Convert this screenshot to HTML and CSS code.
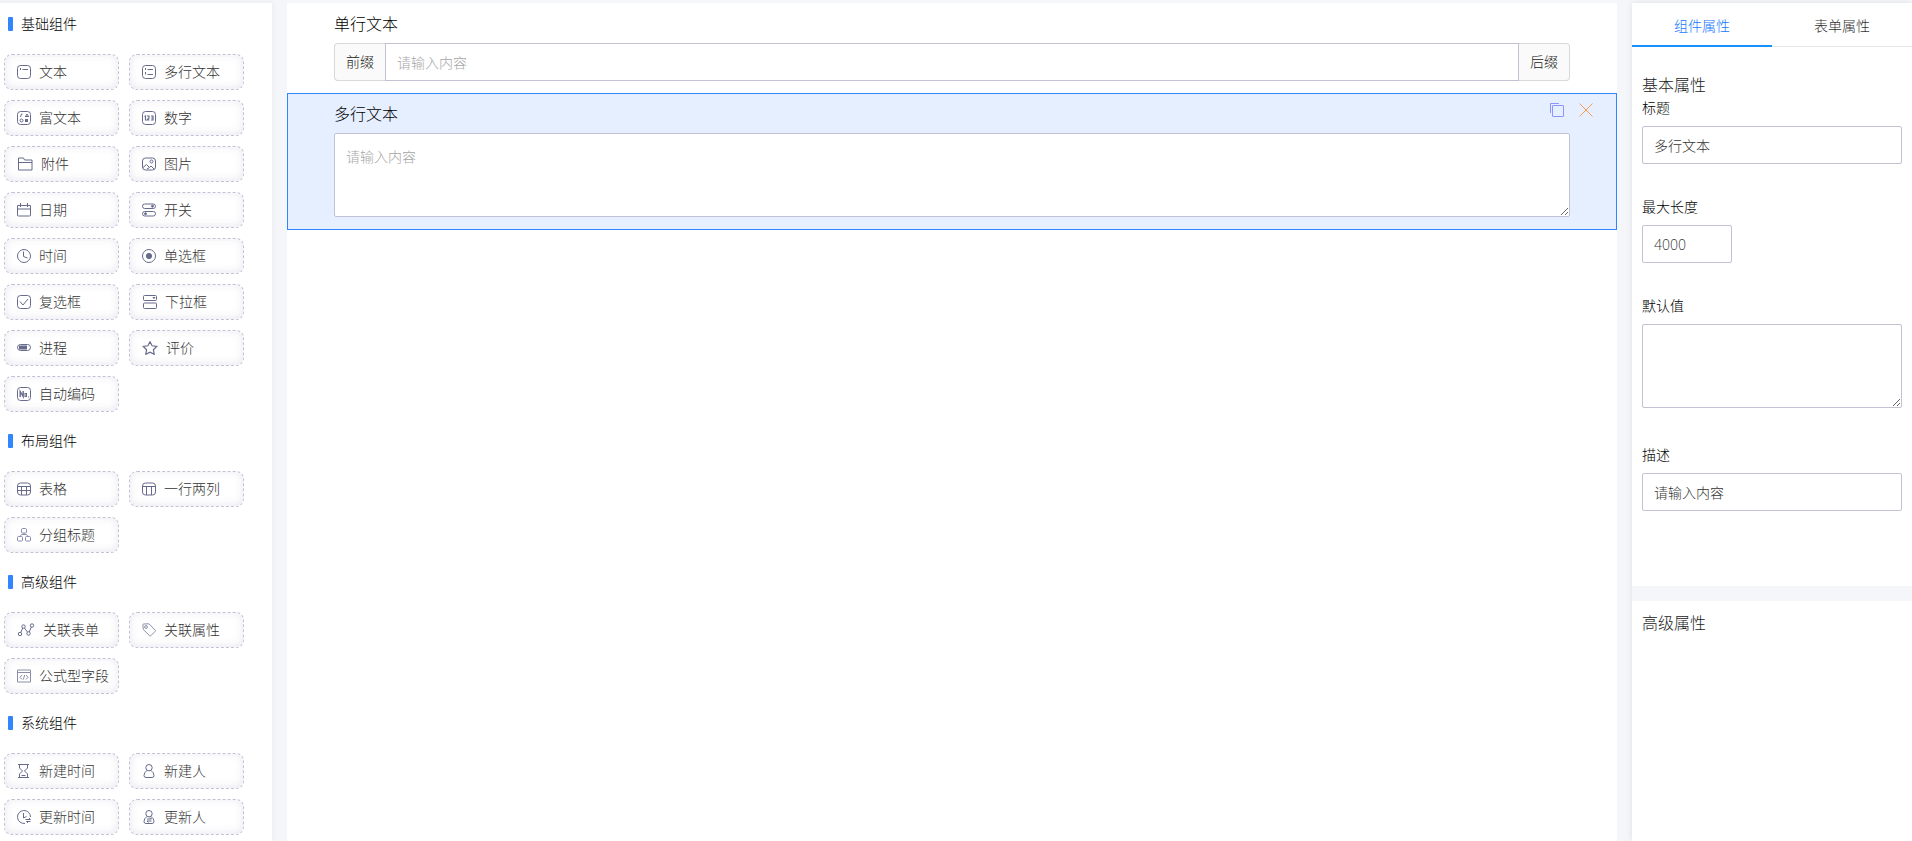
FILE: index.html
```
<!DOCTYPE html>
<html lang="zh-CN">
<head>
  <meta charset="UTF-8">
  <meta name="viewport" content="width=device-width, initial-scale=1.0">
  <title>表单设计</title>
  <link rel="stylesheet" href="styles.css">
</head>
<body>
  <div class="designer">
    <aside class="left">
      <h2 class="group-title">基础组件</h2>
      <div class="chips">
        <button class="chip"><svg width="14" height="14" viewBox="0 0 14 14"><rect x=".5" y=".5" width="13" height="13" rx="3"/><path d="M3.500 3v2M5.500 4.500H11"/></svg>文本</button>
        <button class="chip"><svg width="14" height="14" viewBox="0 0 14 14"><rect x=".5" y=".5" width="13" height="13" rx="3"/><path d="M3.500 3v2M5.500 4.500H11M3.500 7v2.500M5.500 9.500H11"/></svg>多行文本</button>
        <button class="chip"><svg width="14" height="14" viewBox="0 0 14 14"><rect x=".5" y=".5" width="13" height="13" rx="3"/><path d="M5.500 3H4.500L3.500 6M8 5.500h4M8.500 5.500L10 3l1.500 2.500"/><circle cx="4.500" cy="9.500" r="1.500"/><rect class="fill" x="8.500" y="8.500" width="2" height="2"/></svg>富文本</button>
        <button class="chip"><svg width="14" height="14" viewBox="0 0 14 14"><rect x=".5" y=".5" width="13" height="13" rx="3"/><path d="M2.500 5.500l1-.5v4.500M5 5h2v2L5.200 9h2.200M9 5h2v4H9M9.200 7H11" stroke-width="1.200"/></svg>数字</button>
        <button class="chip"><svg width="16" height="14" viewBox="0 0 16 14"><path d="M1.500 13V1h5l1 2H15v10zM1.500 5.500H15"/></svg>附件</button>
        <button class="chip"><svg width="14" height="14" viewBox="0 0 14 14"><rect x=".5" y="1" width="13" height="12" rx="3"/><circle cx="9.500" cy="4.500" r="1.500"/><path d="M1 10.500l3.500-3 3 3L9 9l3 3M5 12l2.500-1.500"/></svg>图片</button>
        <button class="chip"><svg width="14" height="14" viewBox="0 0 14 14"><path d="M.5 2.500h13V12q0 1-1 1h-11q-1 0-1-1zM.5 6h13M3.500 0v4M10.500 0v4"/></svg>日期</button>
        <button class="chip"><svg width="14" height="14" viewBox="0 0 14 14"><rect x=".5" y="1" width="13" height="4.500" rx="2.200"/><rect x=".5" y="8.500" width="13" height="4.500" rx="2.200"/><circle class="fill" cx="10.500" cy="3.200" r="1"/><circle class="fill" cx="3.500" cy="10.700" r="1"/></svg>开关</button>
        <button class="chip"><svg width="14" height="14" viewBox="0 0 14 14"><circle cx="7" cy="7" r="6.500"/><path d="M6.500 2.500v5l4 1.500"/></svg>时间</button>
        <button class="chip"><svg width="14" height="14" viewBox="0 0 14 14"><circle cx="7" cy="7" r="6.500"/><circle class="fill" cx="7" cy="7" r="2.600"/></svg>单选框</button>
        <button class="chip"><svg width="14" height="14" viewBox="0 0 14 14"><rect x=".5" y=".5" width="13" height="13" rx="3"/><path d="M3 6.500l3 3.500 5-6"/></svg>复选框</button>
        <button class="chip"><svg width="15" height="14" viewBox="0 0 15 14"><rect x="1.500" y=".5" width="13" height="5" rx="1"/><rect x="1.500" y="8" width="13" height="5.500" rx="1"/><path class="fill" d="M11 2.500h2l-1 1z"/></svg>下拉框</button>
        <button class="chip"><svg width="14" height="14" viewBox="0 0 14 14"><rect x=".5" y="3.500" width="13" height="6" rx="3"/><rect class="fill" x="2.500" y="5" width="7" height="3"/></svg>进程</button>
        <button class="chip"><svg width="16" height="14" viewBox="0 0 16 14"><path d="M8 .8l2.100 4 4.600.7-3.300 3.200.8 4.600L8 11.200l-4.200 2.100.8-4.600L1.300 5.500l4.600-.7z" stroke-width="1.200"/></svg>评价</button>
        <button class="chip"><svg width="14" height="14" viewBox="0 0 14 14"><rect x=".5" y=".5" width="13" height="13" rx="3"/><path d="M3.200 10V4.500l3 5V4" stroke-width="1.400"/><rect x="8" y="6.500" width="1.500" height="3"/><path d="M11 10h1"/></svg>自动编码</button>
      </div>

      <h2 class="group-title">布局组件</h2>
      <div class="chips">
        <button class="chip"><svg width="14" height="14" viewBox="0 0 14 14"><rect x=".5" y="1" width="13" height="12" rx="3"/><path d="M.5 4.500h13M.5 8.500h13M4.500 4.500V13M9.500 4.500V13"/></svg>表格</button>
        <button class="chip"><svg width="14" height="14" viewBox="0 0 14 14"><rect x=".5" y="1" width="13" height="12" rx="3"/><path d="M.5 4.500h13M4.500 4.500V13M9.500 4.500V13"/></svg>一行两列</button>
        <button class="chip"><svg class="thin" width="14" height="14" viewBox="0 0 14 14"><rect x="4.500" y=".5" width="5" height="4.500" rx="1"/><rect x=".5" y="8.500" width="5" height="4.500" rx="1"/><rect x="8.500" y="8.500" width="5" height="4.500" rx="1"/><path d="M7 5v1.500M3 8.500l1.500-2h5l1.500 2"/></svg>分组标题</button>
      </div>

      <h2 class="group-title">高级组件</h2>
      <div class="chips">
        <button class="chip"><svg width="18" height="14" viewBox="0 0 18 14"><circle cx="3" cy="11" r="1.700"/><circle cx="6.500" cy="3.500" r="1.700"/><circle cx="11.500" cy="10.500" r="1.700"/><circle cx="15" cy="2.500" r="1.700"/><path d="M3.700 9.500l2-4.500M7.500 5l3 4M12.200 9l2.100-5"/></svg>关联表单</button>
        <button class="chip"><svg class="thin" width="14" height="14" viewBox="0 0 14 14"><path d="M1 4V1.500Q1 1 1.500 1L7 .8l6.300 6.400q.4.500 0 1l-4.600 4.600q-.5.400-1 0L1.300 6.500z"/><circle cx="4" cy="4" r="1.400"/></svg>关联属性</button>
        <button class="chip"><svg class="thin" width="14" height="14" viewBox="0 0 14 14"><path d="M.5 1h13v12H.5zM.5 3.500h13M5 6L3 8.300 5 10.500M9 6l2 2.300-2 2.200M7.700 6l-1.400 4.500"/></svg>公式型字段</button>
      </div>

      <h2 class="group-title">系统组件</h2>
      <div class="chips">
        <button class="chip"><svg width="14" height="14" viewBox="0 0 14 14"><path d="M1 .5h11M1 13.500h11M2.500.5V4l3 3-3 3v3.500M10.500.5V4l-3 3 3 3v3.500M4.500 11.500h4"/></svg>新建时间</button>
        <button class="chip"><svg width="14" height="14" viewBox="0 0 14 14"><circle cx="7" cy="3.700" r="3.200"/><path d="M5 6.500Q2 8.500 2 11.500q0 2 2 2h6q2 0 2-2Q12 8.500 9 6.500"/></svg>新建人</button>
        <button class="chip"><svg width="14" height="14" viewBox="0 0 14 14"><path d="M8 13.400A6.500 6.500 0 1 1 13.500 7M6.500 3v5l3-1.500M8.500 9.500h5L12 8M13.500 11.500h-4L11 13"/></svg>更新时间</button>
        <button class="chip"><svg width="14" height="14" viewBox="0 0 14 14"><circle cx="7" cy="3.700" r="3.200"/><path d="M5 6.500Q2 8.500 2 11.500q0 2 2 2h6q2 0 2-2Q12 8.500 9 6.500M5 9h4.500L8 7.500M9.500 11H5l1.500 1.500"/></svg>更新人</button>
      </div>
    </aside>

    <main class="canvas">
      <div class="item">
        <label for="single">单行文本</label>
        <div class="input-group">
          <span class="addon">前缀</span>
          <input id="single" type="text" placeholder="请输入内容">
          <span class="addon">后缀</span>
        </div>
      </div>
      <div class="item selected">
        <label for="multi">多行文本</label>
        <textarea id="multi" placeholder="请输入内容"></textarea>
        <div class="tools">
          <button class="copy" aria-label="复制"><svg width="14" height="14" viewBox="0 0 14 14"><rect x="2.500" y="2.500" width="11" height="11" rx=".5"/><path d="M.5 10V.5H9"/></svg></button>
          <button class="close" aria-label="删除"><svg width="14" height="14" viewBox="0 0 14 14"><path d="M.5.5l13 13M13.500.5l-13 13"/></svg></button>
        </div>
      </div>
    </main>

    <aside class="right">
      <section class="panel">
        <div class="tabs">
          <button class="tab active">组件属性</button>
          <button class="tab">表单属性</button>
        </div>
        <div class="props">
          <h3>基本属性</h3>
          <div class="field">
            <label for="title">标题</label>
            <input id="title" type="text" value="多行文本">
          </div>
          <div class="field">
            <label for="max">最大长度</label>
            <input id="max" class="short" type="text" value="4000">
          </div>
          <div class="field">
            <label for="default">默认值</label>
            <textarea id="default"></textarea>
          </div>
          <div class="field">
            <label for="desc">描述</label>
            <input id="desc" type="text" value="请输入内容">
          </div>
        </div>
      </section>
      <section class="panel advanced">
        <h3>高级属性</h3>
      </section>
    </aside>
  </div>
</body>
</html>
```

FILE: styles.css
```
* {
  box-sizing: border-box;
}
body {
  margin: 0;
  background-color: #f5f6f9;
  font-family: "Open Sans", "Noto Sans CJK SC", sans-serif;
  font-size: 14px;
  font-weight: 300;
  color: #000;
}
button, input, textarea {
  font: inherit;
  color: #333;
}
button {
  border: none;
  background: none;
  padding: 0;
  cursor: pointer;
}
h2, h3 {
  margin: 0;
  font-weight: 300;
}
svg {
  display: block;
  flex-shrink: 0;
  fill: none;
  stroke: #666b8c;
}
.designer {
  display: grid;
  grid-template-columns: 272px 1fr 280px;
  gap: 15px;
  height: 100vh;
  padding-top: 3px;
  overflow: hidden;
}

/* component list */
.left {
  padding: 7px 28px 0 4px;
  background-color: #fff;
  box-shadow: 0 0 6px rgba(60, 70, 110, 0.08);
  overflow: hidden;
}
.group-title {
  display: flex;
  align-items: center;
  gap: 8px;
  height: 28px;
  padding-left: 4px;
  font-size: 14px;
  line-height: 18px;
}
.group-title::before {
  content: "";
  width: 5px;
  height: 14px;
  border-radius: 1px;
  background-color: #3385ff;
}
.chips {
  display: grid;
  grid-template-columns: 115px 115px;
  gap: 10px;
  margin: 16px 0 15px;
}
.chip {
  display: flex;
  align-items: center;
  gap: 8px;
  height: 36px;
  padding-left: 12px;
  border: 1px dashed #c3c1d6;
  border-radius: 8px;
  box-shadow: inset 0 -1px 8px rgba(80, 70, 140, 0.13);
  line-height: 18px;
  white-space: nowrap;
}
.chip .fill {
  fill: #666b8c;
}
.chip .thin {
  stroke: #8a8eaa;
}

/* form canvas */
.canvas {
  background-color: #fff;
}
.item {
  position: relative;
  padding: 8px 46px 11px;
  border: 1px solid transparent;
}
.item label {
  display: block;
  height: 24px;
  margin-bottom: 7px;
  font-size: 16px;
  line-height: 24px;
}
.selected {
  padding-bottom: 12px;
  border-color: #3385ff;
  background-color: #e6efff;
}
input, textarea {
  display: block;
  width: 100%;
  height: 38px;
  padding: 0 11px;
  border: 1px solid #c3c1d3;
  border-radius: 2px;
  background-color: #fff;
  outline: none;
}
textarea {
  height: 84px;
  padding: 12px 11px;
  line-height: 22px;
  resize: vertical;
}
::placeholder {
  color: #a6a6a6;
}
.input-group {
  display: flex;
}
.input-group input {
  flex: 1;
  border-radius: 0;
}
.addon {
  flex-shrink: 0;
  width: 51px;
  border: 1px solid #d9d9d9;
  border-right: none;
  border-radius: 4px 0 0 4px;
  background-color: #fafafa;
  color: #222;
  line-height: 36px;
  text-align: center;
}
.addon:last-child {
  border-right: 1px solid #d9d9d9;
  border-left: none;
  border-radius: 0 4px 4px 0;
}
.tools {
  position: absolute;
  top: 9px;
  right: 23px;
  display: flex;
  gap: 15px;
}
.copy svg {
  stroke: #8c94ff;
}
.close svg {
  stroke: #ff9c4a;
}

/* properties */
.right {
  display: flex;
  flex-direction: column;
  gap: 15px;
  box-shadow: 0 0 6px rgba(60, 70, 110, 0.12);
}
.panel {
  background-color: #fff;
}
.tabs {
  display: flex;
  height: 44px;
  box-shadow: inset 0 -1px #e8e8e8;
}
.tab {
  flex: 1;
  padding-top: 2px;
  border-bottom: 2px solid transparent;
}
.active {
  border-color: #1890ff;
  color: #1677ff;
}
.props {
  padding: 26px 10px 75px;
}
h3 {
  color: #222;
  font-size: 16px;
  line-height: 24px;
}
.field + .field {
  margin-top: 32px;
}
.field label {
  display: block;
  margin-bottom: 7px;
  line-height: 22px;
}
.field textarea {
  margin-bottom: 36px;
}
.field .short {
  width: 90px;
}
.advanced {
  flex: 1;
  padding: 10px;
}
```
